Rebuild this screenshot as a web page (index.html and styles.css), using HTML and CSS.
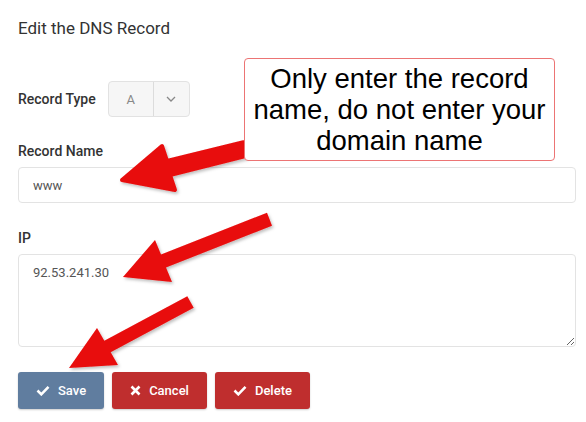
FILE: index.html
```html
<!DOCTYPE html>
<html>
<head>
<meta charset="utf-8">
<link rel="stylesheet" href="styles.css">
</head>
<body>
<div class="page">
  <h1 class="title">Edit the DNS Record</h1>
  <div class="type-row">
    <span class="label">Record Type</span>
    <div class="select">
      <span class="select-value">A</span>
      <span class="select-toggle">
        <svg width="10" height="6" viewBox="0 0 10 6"><path d="M1 1l4 4 4-4" fill="none" stroke="#888" stroke-width="1.3"/></svg>
      </span>
    </div>
  </div>
  <div class="field">
    <label class="label">Record Name</label>
    <input class="input" type="text" value="www">
  </div>
  <div class="field">
    <label class="label">IP</label>
    <textarea class="textarea">92.53.241.30</textarea>
  </div>
  <div class="actions">
    <button class="btn btn-save"><svg class="ico" width="14" height="11" viewBox="0 0 14 11"><path d="M1.5 5.5l3.8 3.8L12.5 1.8" fill="none" stroke="#fff" stroke-width="2.6"/></svg>Save</button>
    <button class="btn btn-red"><svg class="ico" width="11" height="11" viewBox="0 0 11 11"><path d="M1.5 1.5l8 8M9.5 1.5l-8 8" fill="none" stroke="#fff" stroke-width="2.6"/></svg>Cancel</button>
    <button class="btn btn-red"><svg class="ico" width="14" height="11" viewBox="0 0 14 11"><path d="M1.5 5.5l3.8 3.8L12.5 1.8" fill="none" stroke="#fff" stroke-width="2.6"/></svg>Delete</button>
  </div>

  <svg class="arrows" width="586" height="422" viewBox="0 0 586 422">
    <defs>
      <filter id="sh" x="-20%" y="-20%" width="140%" height="140%">
        <feDropShadow dx="1.5" dy="2" stdDeviation="1.5" flood-color="#000" flood-opacity="0.25"/>
      </filter>
    </defs>
    <g filter="url(#sh)" fill="#e80b0b">
      <polygon points="122,180 162,146 167,161 243.4,142.2 246.6,155.8 170,175 175,190" stroke="#e80b0b" stroke-width="4" stroke-linejoin="round"/>
      <polygon points="123,277 155,240 161,254.5 267,212.7 272,225.7 166,267.5 172,282"/>
      <polygon points="69,368 97,328 104.3,340.8 187.3,296.3 193.7,307.7 110.7,352.2 118,365"/>
    </g>
  </svg>
  <div class="callout">Only enter the record name, do not enter your domain name</div>
</div>
</body>
</html>
```

FILE: styles.css
```css
* { box-sizing: border-box; }
html, body { margin: 0; padding: 0; background: #fff; }
body { font-family: Roboto, "Liberation Sans", sans-serif; color: #333; }
.page {
  position: relative;
  width: 586px;
  height: 422px;
  padding: 18px 10px 0 18px;
  overflow: hidden;
}
.title {
  margin: 0;
  font-size: 17px;
  font-weight: 400;
  line-height: 20px;
  color: #333;
}
.type-row {
  display: flex;
  align-items: center;
  gap: 12px;
  margin-top: 43px;
}
.label {
  display: block;
  font-size: 14px;
  font-weight: 500;
  line-height: 16px;
  color: #333;
}
.select {
  display: flex;
  height: 36px;
  border: 1px solid #e2e2e2;
  border-radius: 4px;
  background: #f6f6f6;
}
.select-value {
  width: 45px;
  display: flex;
  align-items: center;
  justify-content: center;
  font-size: 13px;
  color: #888;
  border-right: 1px solid #dcdcdc;
}
.select-toggle {
  width: 35px;
  display: flex;
  align-items: center;
  justify-content: center;
}
.field { margin-top: 26px; }
.field + .field { margin-top: 27px; }
.field .label { margin-bottom: 8px; }
.input, .textarea {
  display: block;
  width: 100%;
  border: 1px solid #e3e3e3;
  border-radius: 4px;
  font-family: Roboto, "Liberation Sans", sans-serif;
  font-size: 13px;
  color: #555;
  background: #fff;
  outline: none;
}
.input {
  height: 36px;
  padding: 0 14px;
}
.textarea {
  height: 93px;
  padding: 10px 14px;
  resize: both;
  line-height: 16px;
}
.actions {
  display: flex;
  gap: 8px;
  margin-top: 25px;
}
.btn {
  display: flex;
  align-items: center;
  gap: 8px;
  height: 37px;
  padding: 0 18px;
  border: 0;
  border-radius: 3px;
  font-family: Roboto, "Liberation Sans", sans-serif;
  font-size: 13px;
  font-weight: 500;
  color: #fff;
  box-shadow: 0 1px 2px rgba(0,0,0,0.2);
}
.btn-save { background: #607d9f; }
.btn-red { background: #bf2e2e; }
.arrows {
  position: absolute;
  left: 0;
  top: 0;
  pointer-events: none;
}
.callout {
  position: absolute;
  left: 244px;
  top: 58px;
  width: 311px;
  height: 103px;
  padding: 4px 4px 0;
  border: 1.5px solid #ec7474;
  border-radius: 4px;
  background: #fff;
  font-family: "Liberation Sans", Arial, sans-serif;
  font-size: 27.5px;
  line-height: 31px;
  color: #000;
  text-align: center;
}
```
